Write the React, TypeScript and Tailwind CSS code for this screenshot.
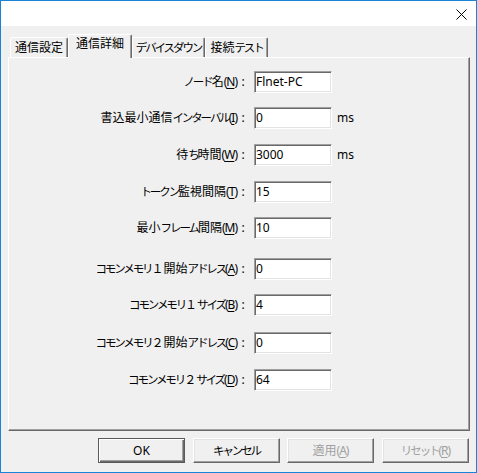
import React from "react";

type Row = {
  label: string;
  mnemonic: string;
  value: string;
  unit?: string;
  gap: string;
};

const rows: Row[] = [
  { label: "ノード名", mnemonic: "N", value: "Flnet-PC", gap: "mt-[13px]" },
  { label: "書込最小通信インターバル", mnemonic: "I", value: "0", unit: "ms", gap: "mt-[14px]" },
  { label: "待ち時間", mnemonic: "W", value: "3000", unit: "ms", gap: "mt-[15px]" },
  { label: "トークン監視間隔", mnemonic: "T", value: "15", gap: "mt-[15px]" },
  { label: "最小フレーム間隔", mnemonic: "M", value: "10", gap: "mt-[14px]" },
  { label: "コモンメモリ１開始アドレス", mnemonic: "A", value: "0", gap: "mt-[19px]" },
  { label: "コモンメモリ１サイズ", mnemonic: "B", value: "4", gap: "mt-[14px]" },
  { label: "コモンメモリ２開始アドレス", mnemonic: "C", value: "0", gap: "mt-[16px]" },
  { label: "コモンメモリ２サイズ", mnemonic: "D", value: "64", gap: "mt-[15px]" },
];

// kana in the original UI font is narrower than in Noto Sans CJK, so shrink it a bit
function Jp({ text }: { text: string }) {
  const parts = text.match(/[\u3040-\u30ff]+|[^\u3040-\u30ff]+/g) ?? [];
  return (
    <>
      {parts.map((p, i) =>
        /[\u3040-\u30ff]/.test(p) ? (
          <span key={i} className="text-[11.5px] tracking-[-2.1px]">{p}</span>
        ) : (
          <span key={i}>{p}</span>
        )
      )}
    </>
  );
}

function Mnemonic({ letter }: { letter: string }) {
  return (
    <span className="tracking-[-1px]">
      (<u className="underline-offset-2">{letter}</u>)
    </span>
  );
}

function Tab({ label, width, selected }: { label: string; width: string; selected?: boolean }) {
  if (selected) {
    return (
      <div
        className={`relative z-10 -mb-px h-[24px] ${width} flex justify-center pt-[3px] whitespace-nowrap bg-[#f0f0f0] border-l border-t border-white border-r border-r-[#696969] shadow-[inset_-1px_0_0_#a0a0a0] rounded-t-[2px]`}
      >
        <Jp text={label} />
      </div>
    );
  }
  return (
    <div
      className={`h-[20px] ${width} flex items-center justify-center whitespace-nowrap bg-[#f0f0f0] border-l border-t border-white border-r border-r-[#696969] shadow-[inset_-1px_0_0_#a0a0a0] rounded-t-[2px]`}
    >
      <Jp text={label} />
    </div>
  );
}

function Button({ children, primary, disabled, className }: { children: React.ReactNode; primary?: boolean; disabled?: boolean; className?: string }) {
  const frame = primary
    ? "border border-[#5a5a5a] shadow-[inset_1px_1px_0_#ffffff,inset_-1px_-1px_0_#696969,inset_-2px_-2px_0_#a0a0a0]"
    : "border-l border-t border-white border-r border-b border-r-[#696969] border-b-[#696969] shadow-[inset_-1px_-1px_0_#a0a0a0,inset_1px_1px_0_#e3e3e3]";
  return (
    <div
      className={`w-[87px] h-[25px] flex items-center justify-center whitespace-nowrap bg-[#f0f0f0] ${frame} ${disabled ? "text-[#a0a0a0]" : "text-black"} ${className ?? ""}`}
    >
      {children}
    </div>
  );
}

function FieldRow({ row }: { row: Row }) {
  return (
    <div className={`flex items-center h-[22px] ${row.gap}`}>
      <div className="w-[228px] text-right whitespace-nowrap">
        <Jp text={row.label} />
        <Mnemonic letter={row.mnemonic} />
      </div>
      <span className="w-[12px] text-center">:</span>
      <div className="ml-[5px] w-[78px] h-[22px] flex items-center pl-[1px] bg-white border border-t-[#a0a0a0] border-l-[#a0a0a0] border-r-white border-b-white shadow-[inset_1px_1px_0_#696969,inset_-1px_-1px_0_#e3e3e3]">
        {row.value}
      </div>
      {row.unit && <span className="ml-[5px]">{row.unit}</span>}
    </div>
  );
}

export default function App() {
  return (
    <div className="w-[477px] h-[473px] flex flex-col bg-[#f0f0f0] border border-[#1883d7] text-[12px] leading-none text-black font-['Noto_Sans','Noto_Sans_CJK_JP',sans-serif]">
      <header className="h-[25px] bg-white flex justify-end items-start pt-[8px] pr-[9px]">
        <svg width="11" height="11" viewBox="0 0 11 11">
          <path d="M0.5 0.5 L10.5 10.5 M10.5 0.5 L0.5 10.5" stroke="#000" strokeWidth="1" fill="none" />
        </svg>
      </header>

      <div className="flex flex-col pl-[7px] pr-[6px]">
        <div className="flex items-end h-[23px] mt-[8px] pl-[2px]">
          <Tab label="通信設定" width="w-[58px]" />
          <Tab label="通信詳細" width="w-[64px]" selected />
          <Tab label="デバイスダウン" width="w-[73px]" />
          <Tab label="接続テスト" width="w-[63px]" />
        </div>

        <main className="h-[374px] flex flex-col border-l border-t border-white border-r border-b border-r-[#696969] border-b-[#696969] shadow-[inset_-1px_-1px_0_#a0a0a0]">
          {rows.map((row) => (
            <FieldRow key={row.mnemonic} row={row} />
          ))}
        </main>

        <div className="flex mt-[7px] pl-[90px]">
          <Button primary>OK</Button>
          <Button className="ml-[8px]">
            <Jp text="キャンセル" />
          </Button>
          <Button className="ml-[7px]" disabled>
            適用<Mnemonic letter="A" />
          </Button>
          <Button className="ml-[8px]" disabled>
            <Jp text="リセット" />
            <Mnemonic letter="R" />
          </Button>
        </div>
      </div>
    </div>
  );
}
